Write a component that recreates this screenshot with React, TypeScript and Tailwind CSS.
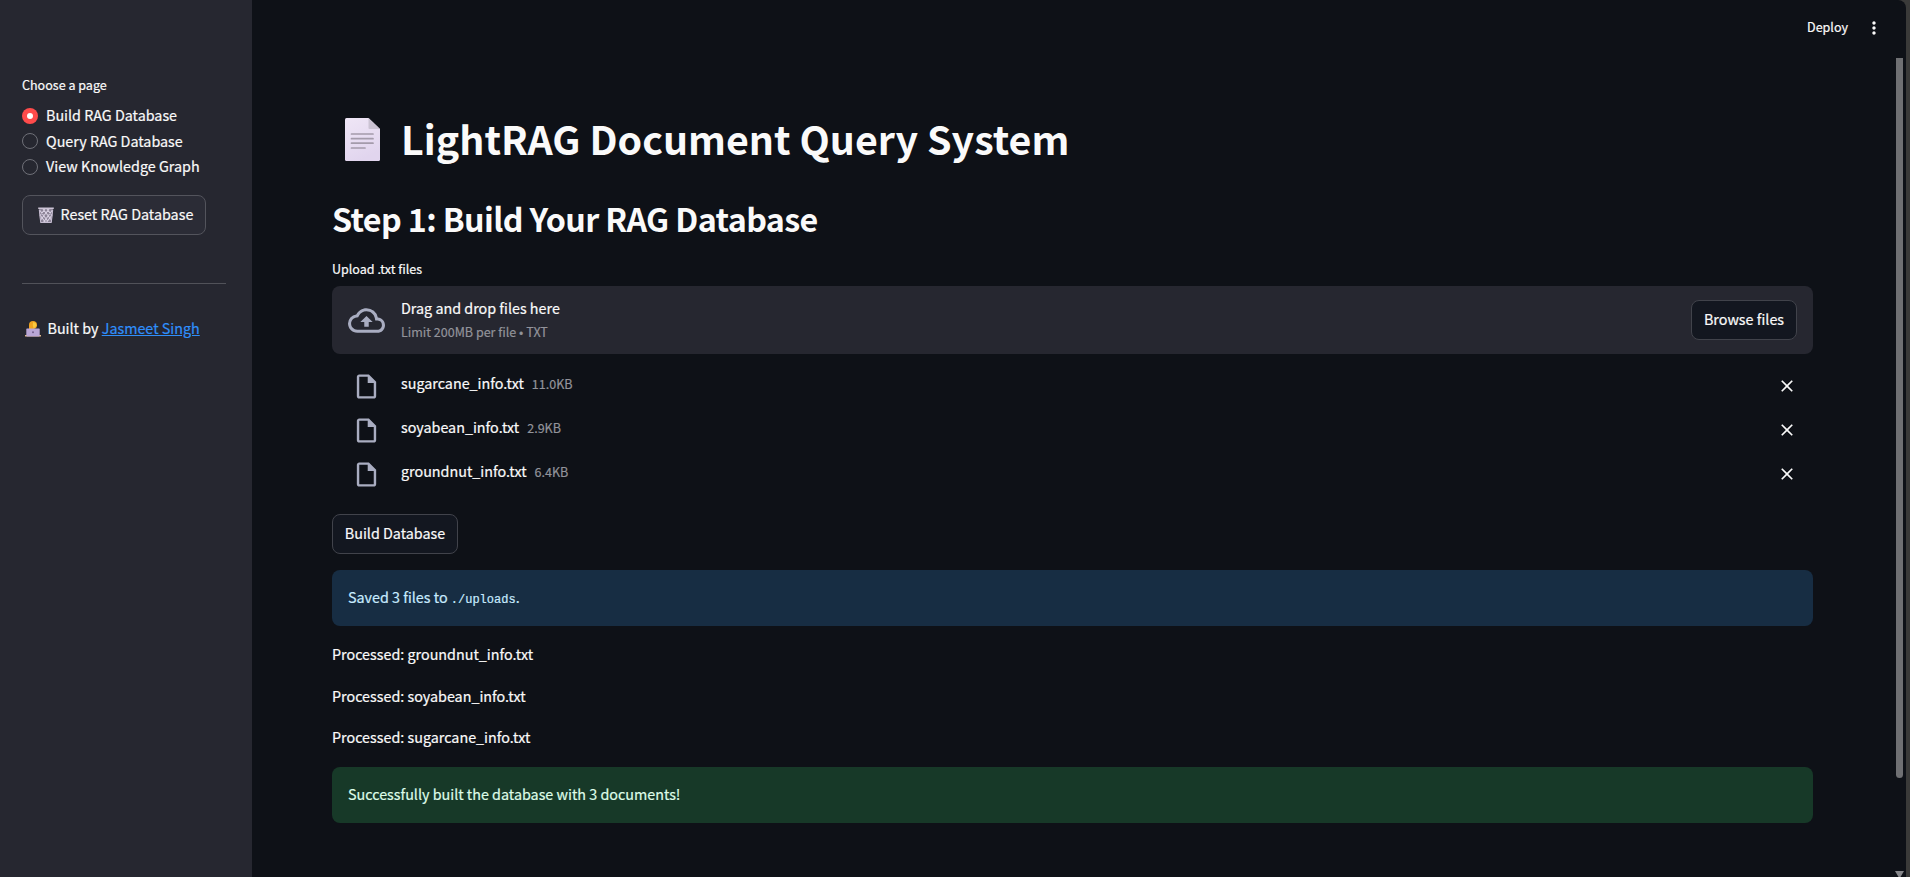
import React from "react";
import {
  MdClose,
  MdMoreVert,
  MdOutlineCloudUpload,
  MdOutlineInsertDriveFile,
} from "react-icons/md";

const pages = ["Build RAG Database", "Query RAG Database", "View Knowledge Graph"];

const files = [
  { name: "sugarcane_info.txt", size: "11.0KB" },
  { name: "soyabean_info.txt", size: "2.9KB" },
  { name: "groundnut_info.txt", size: "6.4KB" },
];

const processed = ["groundnut_info.txt", "soyabean_info.txt", "sugarcane_info.txt"];

function PageEmoji() {
  return (
    <svg viewBox="0 0 35 43" className="h-[43px] w-[35px] shrink-0">
      <defs>
        <linearGradient id="sheet" x1="0" y1="0" x2="0.4" y2="1">
          <stop offset="0" stopColor="#efe6f6" />
          <stop offset="1" stopColor="#e1d5ee" />
        </linearGradient>
      </defs>
      <path d="M1.5 0H23.5L35 11V41.5Q35 43 33.5 43H1.5Q0 43 0 41.5V1.5Q0 0 1.5 0Z" fill="url(#sheet)" />
      <path d="M23.5 0L35 11H24.5Q23.5 11 23.5 10Z" fill="#cbc3d3" />
      <path d="M6.5 16H28M6.5 20.7H28M6.5 25.2H28M6.5 30H20" stroke="#a49bab" strokeWidth="1.7" strokeLinecap="round" />
    </svg>
  );
}

function BinEmoji() {
  return (
    <svg viewBox="0 0 16 16" className="h-4 w-4 shrink-0">
      <path d="M1 2H15L13.6 16H2.4Z" fill="#8a8295" />
      <path
        d="M1.6 3L11 16M5 2L13.4 13M9 2L14 8.5M2 8L8 16M14.4 3L5 16M11 2L2.6 13M7 2L2 8.5M14 8L8 16"
        stroke="#d8d0e2"
        strokeWidth="1.1"
      />
      <path d="M1.3 3L2.7 15.5H13.3L14.7 3" fill="none" stroke="#c6bdd1" strokeWidth="1" />
      <path d="M0.2 1.3H15.8" stroke="#cdc4d6" strokeWidth="1.6" />
    </svg>
  );
}

function TechnologistEmoji() {
  return (
    <svg viewBox="0 0 16 16" className="h-4 w-4 shrink-0">
      <path d="M4 8V3.5Q4.2 0 8 0Q11.8 0 12 3.5V5Q11.6 7.6 9 8Z" fill="#f0a31f" />
      <path d="M8.2 1Q11.4 1.6 11.3 4.2Q10.8 6.6 8.6 7.6Q7 4.6 8.2 1Z" fill="#fbc93f" />
      <path d="M0 14H16V15.5H0Z" fill="#e0b98a" />
      <rect x="1.3" y="7.4" width="13.4" height="8" rx="0.7" fill="#b9a6d6" />
      <circle cx="8" cy="11.2" r="1" fill="#74608f" />
    </svg>
  );
}

function Sidebar() {
  return (
    <aside className="flex w-[252px] shrink-0 flex-col bg-[#262730] pl-[22px] pr-[26px] pt-[74px]">
      <div className="text-[12.54px] leading-[21px]">Choose a page</div>
      <div className="mt-2 flex flex-col">
        {pages.map((page, i) => (
          <label key={page} className="flex h-[25.6px] items-center gap-2">
            {i === 0 ? (
              <span className="flex h-4 w-4 items-center justify-center rounded-full bg-[#ff4b4b]">
                <span className="h-1.5 w-1.5 rounded-full bg-white" />
              </span>
            ) : (
              <span className="h-4 w-4 rounded-full border border-[#6f7078]" />
            )}
            <span className="pb-px leading-6">{page}</span>
          </label>
        ))}
      </div>
      <button className="mt-[15px] flex h-10 w-[184px] items-center gap-[6.5px] rounded-lg border border-[#53545c] bg-[#2b2c36] pl-[15px]">
        <BinEmoji />
        <span className="whitespace-nowrap pb-0.5">Reset RAG Database</span>
      </button>
      <hr className="mt-12 border-t border-[#515259]" />
      <p className="mt-[33px] flex h-6 items-center gap-[6.5px] pl-[3px]">
        <TechnologistEmoji />
        <span className="pb-0.5">
          Built by <a className="text-[#2f8ffb] underline">Jasmeet Singh</a>
        </span>
      </p>
    </aside>
  );
}

function Uploader() {
  return (
    <section>
      <div className="text-[12.54px] leading-[21px]">Upload .txt files</div>
      <div className="mt-[7px] flex h-[68px] items-center rounded-lg bg-[#262730] px-4">
        <MdOutlineCloudUpload className="h-[37px] w-[37px] text-[#a9adc1]" />
        <div className="ml-4 flex flex-col pt-px">
          <span className="leading-[22px]">Drag and drop files here</span>
          <span className="text-[12.54px] leading-[25px] text-[#92939a]">Limit 200MB per file • TXT</span>
        </div>
        <button className="ml-auto h-10 w-[106px] rounded-lg border border-[#41434b] bg-[#131720] pb-0.5">
          Browse files
        </button>
      </div>
      <ul className="mt-[9px] flex flex-col">
        {files.map((file) => (
          <li key={file.name} className="flex h-11 items-center pl-5 pr-4">
            <MdOutlineInsertDriveFile className="mt-0.5 h-[29px] w-[29px] text-[#a9adc1]" />
            <span className="ml-5 pb-[5px] leading-6">{file.name}</span>
            <span className="ml-2 pb-0.5 text-[12.54px] leading-6 text-[#92939a]">{file.size}</span>
            <MdClose className="ml-auto mt-px h-5 w-5" />
          </li>
        ))}
      </ul>
    </section>
  );
}

export default function App() {
  return (
    <div className="flex h-[877px] w-full overflow-hidden bg-[#3a3a39] font-['Source_Sans_Pro','Noto_Sans_CJK_JP',sans-serif] text-[14.33px] text-[#fafafa] [-webkit-text-stroke:0.2px]">
      <div className="relative flex w-[1906px] overflow-hidden rounded-tr-lg bg-[#0e1117]">
        <Sidebar />
        <main className="flex flex-1 flex-col pl-20 pr-[93px]">
          <header className="-mr-[93px] flex h-14 shrink-0 items-center justify-end gap-4 pr-[22px]">
            <span className="pb-0.5 text-[12.54px]">Deploy</span>
            <MdMoreVert className="h-5 w-5" />
          </header>
          <h1 className="mt-[57px] flex h-[53px] items-center gap-[21px] pl-[13px] text-[39.36px] font-bold leading-[53px] [-webkit-text-stroke:0px]">
            <PageEmoji />
            <span className="pb-1">LightRAG Document Query System</span>
          </h1>
          <h2 className="mt-[31px] text-[32.24px] font-semibold leading-[43px] tracking-[-0.62px] [-webkit-text-stroke:0px]">
            Step 1: Build Your RAG Database
          </h2>
          <div className="mt-[18px]">
            <Uploader />
          </div>
          <button className="mt-[19px] h-10 w-[126px] rounded-lg border border-[#41434b] bg-[#131720] pb-0.5">
            Build Database
          </button>
          <div className="mt-4 flex h-14 items-center rounded-lg bg-[#172d43] px-4 text-[#c7ebff]">
            <p className="pb-0.5">
              Saved 3 files to <code className="font-['Liberation_Mono',monospace] text-[12px]">./uploads</code>.
            </p>
          </div>
          <div className="mt-4 flex flex-col gap-[17.6px]">
            {processed.map((name) => (
              <p key={name} className="leading-6">
                Processed: {name}
              </p>
            ))}
          </div>
          <div className="mt-[17.8px] flex h-14 items-center rounded-lg bg-[#173928] px-4 text-[#dffde9]">
            <p className="pb-[3px]">Successfully built the database with 3 documents!</p>
          </div>
        </main>
        <div className="absolute right-[3px] top-[58px] h-[720px] w-[7px] rounded-b-full bg-[#6f7073]" />
        <svg viewBox="0 0 9 6" className="absolute bottom-0 right-[2px] h-1.5 w-[9px]">
          <path d="M0 0H9L5.5 6H3.5Z" fill="#85868a" />
        </svg>
      </div>
    </div>
  );
}
